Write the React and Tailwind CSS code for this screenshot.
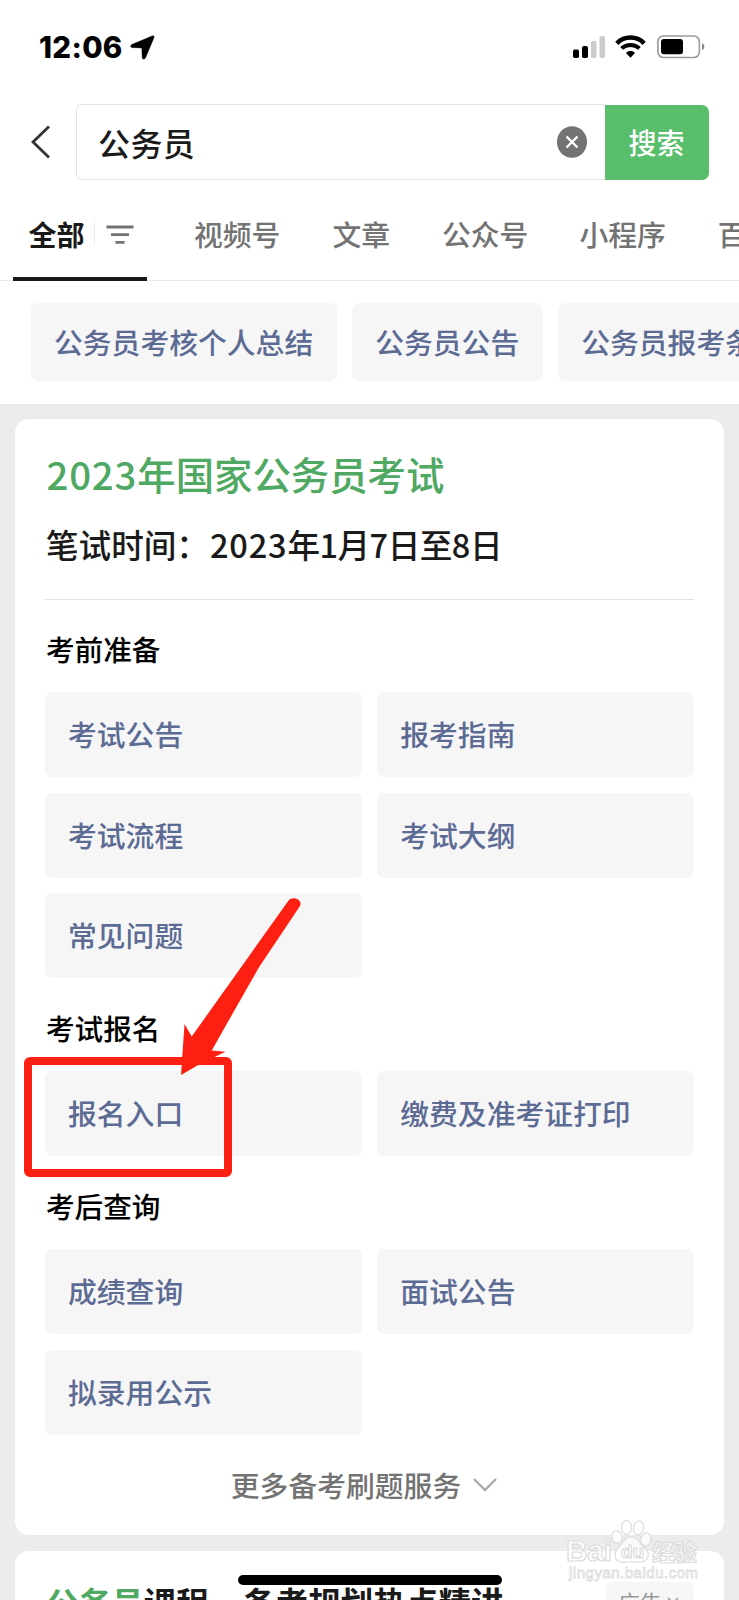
const TABS = [
  { label: '视频号', spacing: 'ml-[47px]' },
  { label: '文章', spacing: 'ml-[52px]' },
  { label: '公众号', spacing: 'ml-[52px]' },
  { label: '小程序', spacing: 'ml-[51px]' },
  { label: '百科', spacing: 'ml-[52px]' },
];

const SUGGESTIONS = ['公务员考核个人总结', '公务员公告', '公务员报考条件'];

const SECTIONS = [
  { title: '考前准备', items: ['考试公告', '报考指南', '考试流程', '考试大纲', '常见问题'] },
  { title: '考试报名', items: ['报名入口', '缴费及准考证打印'] },
  { title: '考后查询', items: ['成绩查询', '面试公告', '拟录用公示'] },
];

function StatusBar() {
  return (
    <div className="h-[104px] shrink-0 flex items-start justify-between pl-[39px] pr-[33px] pt-[35px]">
      <div className="flex items-start">
        <span className="w-[84px] font-['Inter'] font-extrabold text-[29.5px] leading-[24px] tracking-[0.3px] text-black">12:06</span>
        <svg className="ml-[7px]" width="25" height="25" viewBox="0 0 25 25">
          <path
            d="M22.2 0.9 L1.8 9.6 C0.2 10.4 0.4 12.3 2 12.5 L11.1 12.9 C11.6 12.9 11.9 13.2 11.9 13.7 L12.2 22.4 C12.4 24.5 14.6 24.6 15.4 23 L23.9 2.8 C24.5 1.3 23.5 0.3 22.2 0.9 Z"
            fill="#000"
            stroke="#000"
            strokeWidth="0.5"
          />
        </svg>
      </div>
      <div className="flex items-start">
        <svg width="33" height="24" viewBox="0 0 33 24">
          <rect x="0" y="14.5" width="6" height="8.5" rx="1.7" fill="#000" />
          <rect x="9" y="11" width="6" height="12" rx="1.7" fill="#000" />
          <rect x="18" y="6" width="5.5" height="17" rx="1.7" fill="#ccc" />
          <rect x="26.5" y="1" width="5.5" height="22" rx="1.7" fill="#ccc" />
        </svg>
        <svg className="ml-[9px]" width="31" height="24" viewBox="0 0 31 24">
          <path d="M1.8 8.3 C9.5 0.7 21.5 0.7 29.2 8.3" fill="none" stroke="#000" strokeWidth="4.5" />
          <path d="M6.6 13.4 C11.7 8.7 19.3 8.7 24.4 13.4" fill="none" stroke="#000" strokeWidth="4" />
          <path d="M11 18 C13.4 15.4 17.6 15.4 20 18 L15.5 22.8 Z" fill="#000" />
        </svg>
        <svg className="ml-[11px]" width="49" height="24" viewBox="0 0 49 24">
          <rect x="0.9" y="1" width="41.5" height="21.5" rx="5.5" fill="none" stroke="#999" strokeWidth="1.6" />
          <rect x="4" y="4" width="22" height="15.3" rx="3" fill="#000" />
          <path d="M45 8.3 C48.1 9.3 48.1 14.2 45 15.2 Z" fill="#888" />
        </svg>
      </div>
    </div>
  );
}

function SearchBar() {
  return (
    <div className="h-[76px] shrink-0 flex items-center pl-[31px] pr-[30px]">
      <svg width="20" height="34" viewBox="0 0 20 34" className="shrink-0">
        <path d="M18 1.5 L2 17 L18 32.5" fill="none" stroke="#333" strokeWidth="2.8" />
      </svg>
      <div className="ml-[25px] flex-1 h-[76px] flex items-center justify-between border border-r-0 border-[#e3e3e3] rounded-l-[6px] pl-[21px] pr-[18px]">
        <span className="text-[32px] leading-none tracking-[0.4px] font-medium text-[#1a1a1a]">公务员</span>
        <svg width="30" height="32" viewBox="0 0 30 32">
          <ellipse cx="15" cy="16" rx="15" ry="15.8" fill="#737373" />
          <path d="M9.5 10.5 L20.5 21.5 M20.5 10.5 L9.5 21.5" stroke="#fff" strokeWidth="2.4" />
        </svg>
      </div>
      <button className="w-[104px] h-[75px] pr-[1px] rounded-r-[7px] bg-[#59be6c] text-white text-[28px] font-medium leading-none">搜索</button>
    </div>
  );
}

function Tabs() {
  return (
    <div className="h-[101px] shrink-0 flex items-stretch border-b border-[#e8e8e8] pl-[13px] whitespace-nowrap text-[28.8px] leading-none">
      <div className="relative w-[134px] shrink-0 flex items-center pl-[15.5px] pb-[2px] pt-[10px]">
        <span className="font-bold text-[28px] text-[#1a1a1a]">全部</span>
        <span className="ml-[9px] w-px h-[24px] bg-[#ececec]" />
        <svg className="ml-[11.5px] mt-[2px]" width="28" height="20" viewBox="0 0 28 20">
          <path d="M0.5 2 H27.5 M5 9.7 H23 M9.5 17.3 H18.5" stroke="#737373" strokeWidth="2.8" />
        </svg>
        <span className="absolute left-0 right-0 -bottom-px h-[4px] bg-[#1a1a1a]" />
      </div>
      {TABS.map((tab) => (
        <span
          key={tab.label}
          className={`${tab.spacing} shrink-0 flex items-center pb-[2px] pt-[11px] font-medium text-[#737373]`}
        >
          {tab.label}
        </span>
      ))}
    </div>
  );
}

function Suggestions() {
  return (
    <div className="h-[123px] shrink-0 flex gap-[15px] pl-[30.5px] pt-[22px] whitespace-nowrap">
      {SUGGESTIONS.map((text) => (
        <span
          key={text}
          className="h-[78px] shrink-0 flex items-center px-[23.5px] pt-px rounded-[7px] bg-[#f6f6f6] text-[28.8px] leading-none font-medium text-[#5c6b94]"
        >
          {text}
        </span>
      ))}
    </div>
  );
}

function Tile({ children }) {
  return (
    <div className="h-[85px] flex items-center pl-[23px] rounded-[7px] bg-[#f6f6f6] text-[28.8px] leading-none font-medium text-[#5c6b94]">
      {children}
    </div>
  );
}

// Highlight frame and arrow pointing at the sign-up entry
function Annotation() {
  return (
    <>
      <div className="absolute left-[24px] top-[1057px] w-[208px] h-[120px] border-[8px] border-[#fd2012] rounded-[6px]" />
      <svg className="absolute left-[170px] top-[890px]" width="140" height="190" viewBox="170 890 140 190">
        <path
          d="M288.6 900.5 C292 895.5 303 899 300 906 L258.5 968 L211.7 1050.5 L225.5 1051.7 L200 1064 L181 1075 L184.5 1024 L191.7 1036.5 L245 961.7 Z"
          fill="#fd2012"
        />
      </svg>
    </>
  );
}

function Watermark() {
  return (
    <svg className="absolute left-[560px] top-[1515px]" width="150" height="70" viewBox="0 0 150 70">
      <g fill="#fff" fillOpacity="0.8" stroke="#dcdcdc" strokeWidth="1.2">
        <ellipse cx="57" cy="22" rx="5" ry="6.5" transform="rotate(-12 57 22)" />
        <ellipse cx="66.5" cy="12.5" rx="5" ry="7" />
        <ellipse cx="78.5" cy="13" rx="5" ry="7" transform="rotate(12 78.5 13)" />
        <ellipse cx="86" cy="24.5" rx="5" ry="6.5" transform="rotate(12 86 24.5)" />
        <path d="M71 22 C78 22 80 29 85 33 C91 39 88 47 80 47 C75 47 72 46 69 47 C62 48 55 47 55 40 C55 33 60 32 63 27 C65 24 67 22 71 22 Z" />
        <text x="6" y="46" fontFamily="Liberation Sans" fontWeight="700" fontSize="30" textLength="46">Bai</text>
        <text x="61" y="43" fontFamily="Liberation Sans" fontWeight="700" fontSize="19">du</text>
        <text x="92" y="46" fontFamily="Noto Sans CJK SC" fontWeight="700" fontSize="23" textLength="45">经验</text>
        <text x="9" y="63" fontFamily="Liberation Sans" fontSize="15" strokeWidth="0.8" textLength="129">jingyan.baidu.com</text>
      </g>
    </svg>
  );
}

export default function App() {
  return (
    <div className="relative w-[739px] h-[1600px] overflow-hidden flex flex-col bg-white font-['Noto_Sans_CJK_SC',sans-serif]">
      <StatusBar />
      <SearchBar />
      <Tabs />
      <Suggestions />

      <main className="flex-1 min-h-0 bg-[#ececec] pt-[15px] px-[15px] flex flex-col gap-[16px]">
        <section className="h-[1116px] shrink-0 flex flex-col rounded-[14px] bg-white px-[30px]">
          <h1 className="mt-[34px] pl-[1.5px] text-[38.4px] leading-[40px] font-medium text-[#50a963]">
            <span className="tracking-[0.8px]">2023</span>年国家公务员考试
          </h1>
          <p className="mt-[32px] pl-px text-[32.6px] leading-[38px] font-medium text-[#1a1a1a]">
            笔试时间：<span className="ml-px tracking-[0.8px]">2023</span>
            <span className="tracking-[-0.5px]">年1月7日至8日</span>
          </p>
          <hr className="mt-[36px] border-[#e3e3e3]" />
          {SECTIONS.map((section, i) => (
            <div key={section.title} className={i === 0 ? 'mt-[34px]' : 'mt-[35px]'}>
              <h2 className="pl-px text-[28.6px] leading-[30px] font-medium text-black">{section.title}</h2>
              <div className="mt-[28px] grid grid-cols-2 gap-[15.5px]">
                {section.items.map((item) => (
                  <Tile key={item}>{item}</Tile>
                ))}
              </div>
            </div>
          ))}
          <div className="mt-[35px] flex items-center justify-center gap-[12px] pr-[11px] text-[28.8px] leading-[30px] font-medium text-[#737373]">
            更多备考刷题服务
            <svg className="mt-px" width="24" height="14" viewBox="0 0 24 14">
              <path d="M1 1 L12 12 L23 1" fill="none" stroke="#aaa" strokeWidth="2.4" />
            </svg>
          </div>
        </section>

        <section className="h-[140px] shrink-0 flex items-start justify-between rounded-[14px] bg-white px-[30px] pt-[31px] whitespace-nowrap">
          <h2 className="pl-px pt-[2px] text-[32.6px] leading-[36px] font-bold text-[#1a1a1a]">
            <span className="text-[#50a963]">公务员</span>课程<span className="inline-block w-[34px]" />备考规划热点精讲
          </h2>
          <span className="h-[37px] w-[88px] rounded-[6px] bg-[#f6f6f6] flex items-center gap-[5px] pl-[12px] text-[22px] leading-none text-[#999]">
            广告
            <svg width="12" height="8" viewBox="0 0 12 8">
              <path d="M1 1 L6 6 L11 1" fill="none" stroke="#999" strokeWidth="1.5" />
            </svg>
          </span>
        </section>
      </main>

      <div className="absolute left-[238px] top-[1575px] w-[264px] h-[10px] rounded-full bg-black" />
      <Annotation />
      <Watermark />
    </div>
  );
}
